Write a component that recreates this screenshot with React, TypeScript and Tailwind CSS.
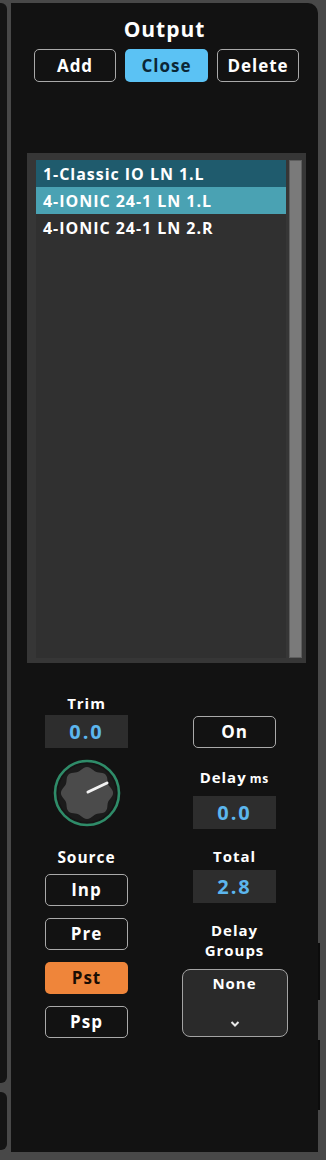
import React from "react";

const font = { fontFamily: '"Open Sans", "Noto Sans", sans-serif', letterSpacing: "0.06em" };

function knobPath() {
  const pts: string[] = [];
  const n = 96;
  for (let i = 0; i <= n; i++) {
    const t = (i / n) * Math.PI * 2;
    const r = 24.5 + 1.6 * Math.cos(8 * t);
    const x = 35 + r * Math.cos(t);
    const y = 35 + r * Math.sin(t);
    pts.push(`${i === 0 ? "M" : "L"}${x.toFixed(2)} ${y.toFixed(2)}`);
  }
  return pts.join(" ") + " Z";
}
const KNOB = knobPath();

function Knob() {
  return (
    <svg width="70" height="70" viewBox="0 0 70 70">
      <circle cx="35" cy="35" r="32" fill="#151515" stroke="#2f8c69" strokeWidth="2.6" />
      <circle cx="35" cy="35" r="29" fill="#1b1b1b" />
      <path d={KNOB} fill="#4b4b4b" />
      <line x1="36" y1="34" x2="55" y2="25" stroke="#f2f2f2" strokeWidth="3" strokeLinecap="round" />
    </svg>
  );
}

function OutlineBtn({ label, className = "" }: { label: string; className?: string }) {
  return (
    <div
      className={`flex items-center justify-center rounded-[5px] border-[1.5px] border-[#a9a9a9] bg-[#121212] text-[17px] font-bold text-white ${className}`}
    >
      {label}
    </div>
  );
}

function ValueBox({ value }: { value: string }) {
  return (
    <div className="flex h-[33px] w-[83px] items-center justify-center bg-[#2d2d2d] text-[20px] font-bold tracking-[0.1em] text-[#5cb6ee]">
      {value}
    </div>
  );
}

export default function App() {
  return (
    <div className="flex h-[1160px] w-[326px] bg-[#484848] text-white" style={font}>
      {/* left neighbour strip */}
      <div className="flex w-[7px] flex-col pt-[3px] pb-[10px]">
        <div className="h-[1080px] rounded-br-[6px] rounded-tr-[6px] bg-[#141414]" />
        <div className="mt-[9px] flex-1 rounded-br-[6px] rounded-tr-[6px] bg-[#141414]" />
      </div>
      {/* main panel */}
      <div className="ml-[4px] mt-[3px] mb-[8px] flex w-[307px] flex-col rounded-tr-[10px] bg-[#121212]">
        <div className="mt-[14px] text-center text-[21px] font-bold leading-[24px]">Output</div>
        <div className="mt-[8px] flex gap-[9px] pl-[23px]">
          <OutlineBtn label="Add" className="h-[33px] w-[82px]" />
          <div className="flex h-[33px] w-[83px] items-center justify-center rounded-[5px] bg-[#5bc2f4] text-[17px] font-bold text-[#0b2635]">
            Close
          </div>
          <OutlineBtn label="Delete" className="h-[33px] w-[82px]" />
        </div>
        {/* list */}
        <div className="ml-[16px] mt-[71px] flex h-[510px] w-[279px] bg-[#363636] pt-[7px] pl-[9px]">
          <div className="flex h-[498px] w-[250px] flex-col bg-[#303030]">
            <div className="flex h-[27px] items-center bg-[#1f5b6d] pl-[7px] text-[16px] font-bold">1-Classic IO LN 1.L</div>
            <div className="flex h-[27px] items-center bg-[#4aa2b3] pl-[7px] text-[16px] font-bold">4-IONIC 24-1 LN 1.L</div>
            <div className="flex h-[27px] items-center pl-[7px] text-[16px] font-bold">4-IONIC 24-1 LN 2.R</div>
          </div>
          <div className="ml-[3px] h-[498px] w-[13px] border border-[#5e5e5e] bg-[#7a7a7a]" />
        </div>
        {/* controls */}
        <div className="flex">
          <div className="ml-[34px] flex w-[83px] flex-col items-center">
            <div className="mt-[31px] text-[15px] font-bold leading-[18px]">Trim</div>
            <div className="mt-[3px]">
              <ValueBox value="0.0" />
            </div>
            <div className="mt-[10px]">
              <Knob />
            </div>
            <div className="mt-[20px] text-[15.5px] font-bold leading-[18px]">Source</div>
            <div className="mt-[8px] flex flex-col gap-[12px]">
              <OutlineBtn label="Inp" className="h-[32px] w-[83px]" />
              <OutlineBtn label="Pre" className="h-[32px] w-[83px]" />
              <div className="flex h-[32px] w-[83px] items-center justify-center rounded-[5px] bg-[#ef853a] text-[17px] font-bold text-[#1a0d04]">
                Pst
              </div>
              <OutlineBtn label="Psp" className="h-[32px] w-[83px]" />
            </div>
          </div>
          <div className="ml-[65px] flex w-[83px] flex-col items-center">
            <OutlineBtn label="On" className="mt-[53px] h-[32px] w-[83px]" />
            <div className="mt-[20px] flex items-baseline gap-[3px] leading-[18px]">
              <span className="text-[15px] font-bold">Delay</span>
              <span className="text-[12px] font-bold">ms</span>
            </div>
            <div className="mt-[8px]">
              <ValueBox value="0.0" />
            </div>
            <div className="mt-[18px] text-[15px] font-bold leading-[18px]">Total</div>
            <div className="mt-[5px]">
              <ValueBox value="2.8" />
            </div>
            <div className="mt-[17px] text-center text-[15px] font-bold leading-[20px]">
              Delay
              <br />
              Groups
            </div>
            <div className="mt-[9px] flex h-[68px] w-[106px] shrink-0 flex-col items-center rounded-[8px] border-[1.5px] border-[#a3a3a3] bg-[#2a2a2a]">
              <div className="mt-[3px] text-[15px] font-bold leading-[20px]">None</div>
              <svg className="mt-[27px]" width="12" height="8" viewBox="0 0 12 8">
                <path d="M2.5 2 L6 5.5 L9.5 2" fill="none" stroke="#e8e8e8" strokeWidth="2" />
              </svg>
            </div>
          </div>
        </div>
      </div>
      {/* right neighbour strip */}
      <div className="flex w-[8px] flex-col">
        <div className="mt-[943px] h-[57px] w-[2px] bg-[#0c0c0c]" />
        <div className="mt-[40px] h-[70px] w-[2px] bg-[#0c0c0c]" />
      </div>
    </div>
  );
}
